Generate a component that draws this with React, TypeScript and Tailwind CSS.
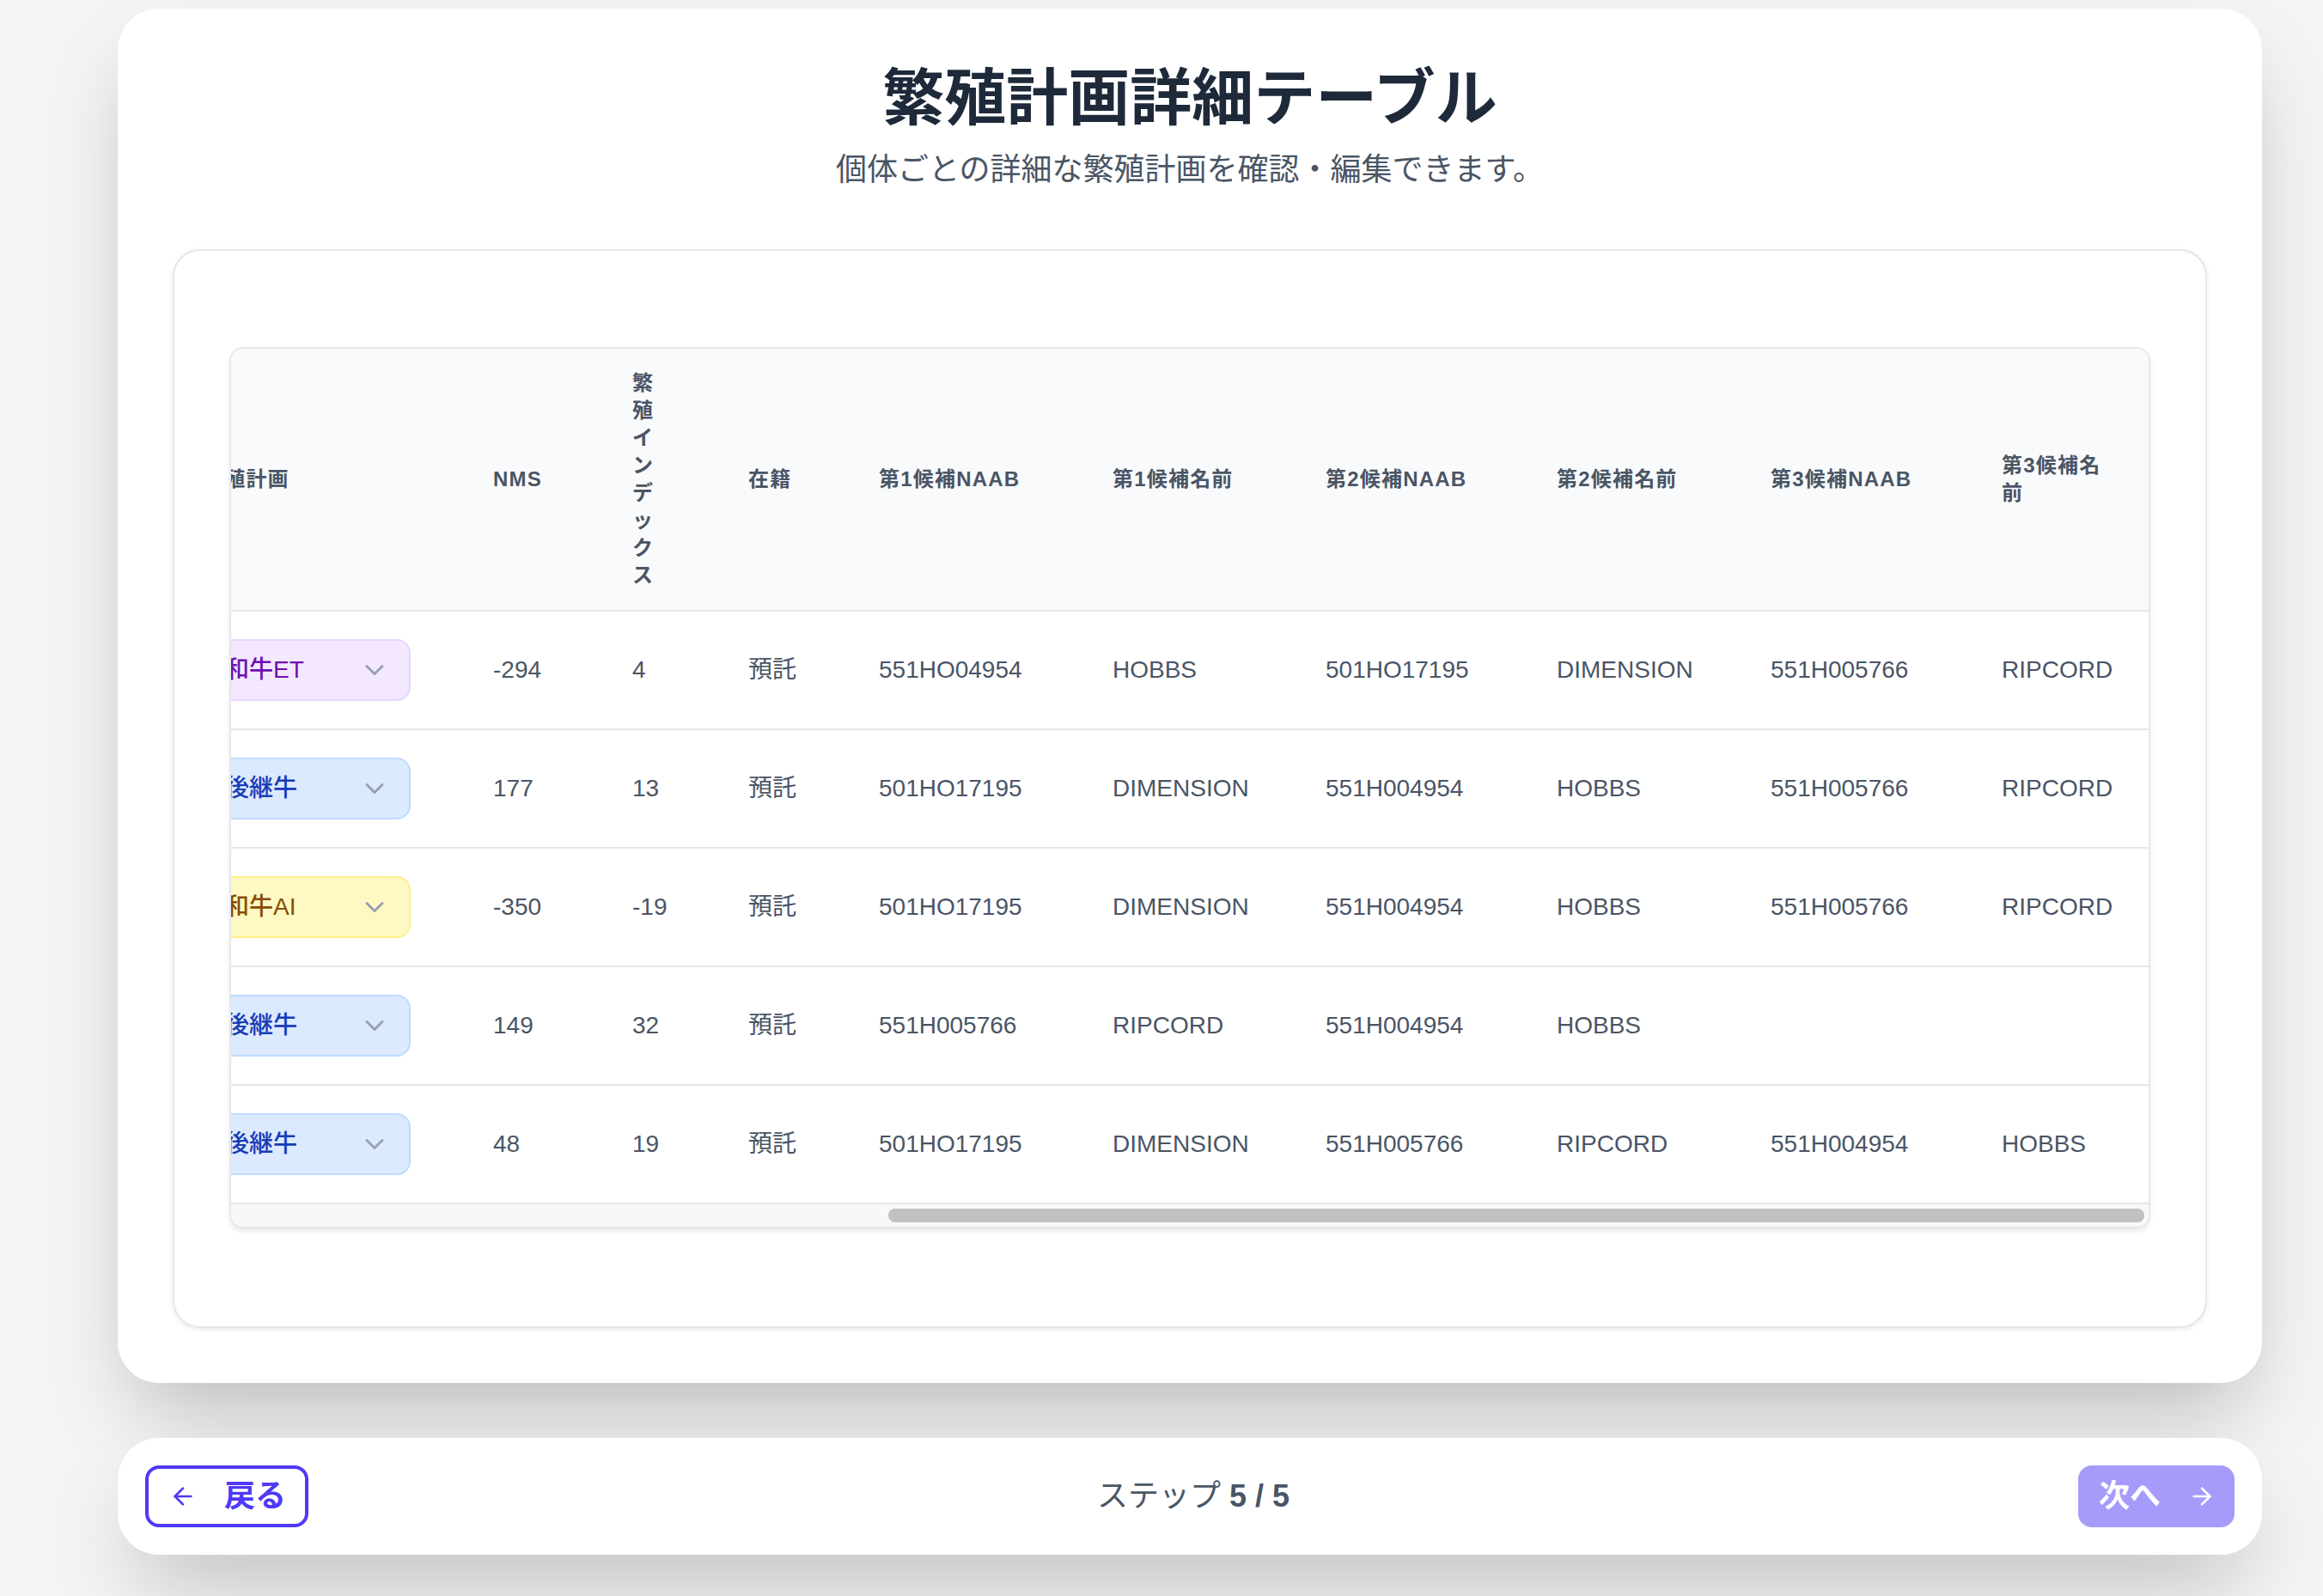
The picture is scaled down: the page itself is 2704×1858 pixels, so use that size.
import { useLayoutEffect, useRef } from "react";
import { ArrowLeft, ArrowRight, ChevronDown } from "lucide-react";

type Plan = "和牛ET" | "後継牛" | "和牛AI";

const planStyles: Record<Plan, string> = {
  和牛ET: "bg-purple-100 border-purple-200 text-purple-800",
  後継牛: "bg-blue-100 border-blue-200 text-blue-800",
  和牛AI: "bg-yellow-100 border-yellow-200 text-yellow-800",
};

type Row = {
  plan: Plan;
  nms: string;
  idx: string;
  status: string;
  c: string[];
};

const rows: Row[] = [
  { plan: "和牛ET", nms: "-294", idx: "4", status: "預託", c: ["551HO04954", "HOBBS", "501HO17195", "DIMENSION", "551H005766", "RIPCORD"] },
  { plan: "後継牛", nms: "177", idx: "13", status: "預託", c: ["501HO17195", "DIMENSION", "551H004954", "HOBBS", "551H005766", "RIPCORD"] },
  { plan: "和牛AI", nms: "-350", idx: "-19", status: "預託", c: ["501HO17195", "DIMENSION", "551H004954", "HOBBS", "551H005766", "RIPCORD"] },
  { plan: "後継牛", nms: "149", idx: "32", status: "預託", c: ["551H005766", "RIPCORD", "551H004954", "HOBBS", "", ""] },
  { plan: "後継牛", nms: "48", idx: "19", status: "預託", c: ["501HO17195", "DIMENSION", "551H005766", "RIPCORD", "551H004954", "HOBBS"] },
];

const colWidths = [
  "w-[1071px]",
  "w-[338px]",
  "w-[162px]",
  "w-[135px]",
  "w-[152px]",
  "w-[272px]",
  "w-[248px]",
  "w-[269px]",
  "w-[249px]",
  "w-[269px]",
  "w-[219px]",
];

const headers = [
  "",
  "繁殖計画",
  "NMS",
  "繁殖インデックス",
  "在籍",
  "第1候補NAAB",
  "第1候補名前",
  "第2候補NAAB",
  "第2候補名前",
  "第3候補NAAB",
  "第3候補名前",
];

const thCls =
  "px-[48px] py-[24px] text-left align-middle text-[24px] leading-[32px] font-semibold uppercase tracking-wider text-gray-600";
const tdCls =
  "px-[48px] py-[32px] align-middle whitespace-nowrap text-[28px] leading-[40px] text-gray-600";

function PlanSelect({ plan }: { plan: Plan }) {
  return (
    <div
      className={`flex h-[72px] w-full items-center justify-between rounded-[16px] border-2 pl-[24px] pr-[22px] text-[28px] leading-[40px] font-medium ${planStyles[plan]}`}
    >
      <span>{plan}</span>
      <ChevronDown size={36} strokeWidth={2} className="text-gray-400" />
    </div>
  );
}

export default function App() {
  const scrollRef = useRef<HTMLDivElement>(null);

  useLayoutEffect(() => {
    const el = scrollRef.current;
    if (el) el.scrollLeft = el.scrollWidth;
  }, []);

  return (
    <div className="min-h-screen bg-gray-100 pt-[10px] pl-[137px] font-[family-name:'Liberation_Sans','Noto_Sans_CJK_JP',sans-serif]">
      <div className="w-[2496px]">
        <main className="rounded-[48px] bg-white p-[64px] shadow-[0_50px_100px_-24px_rgba(0,0,0,0.25)]">
          <div className="mb-[64px] text-center">
            <h1 className="text-[72px] leading-[80px] font-bold text-gray-800">
              繁殖計画詳細テーブル
            </h1>
            <p className="mt-[16px] text-[36px] leading-[56px] text-gray-600">
              個体ごとの詳細な繁殖計画を確認・編集できます。
            </p>
          </div>

          <section className="rounded-[32px] border-2 border-gray-200 bg-white px-[64px] pt-[112px] pb-[114px] shadow-[0_2px_6px_rgba(0,0,0,0.08)]">
            <div className="overflow-hidden rounded-[16px] border-2 border-gray-200 bg-white shadow-[0_4px_6px_-1px_rgba(0,0,0,0.1)]">
              <div ref={scrollRef} className="overflow-x-hidden">
                <table className="w-[3384px] table-fixed border-collapse">
                  <colgroup>
                    {colWidths.map((w, i) => (
                      <col key={i} className={w} />
                    ))}
                  </colgroup>
                  <thead className="bg-gray-50">
                    <tr className="border-b-2 border-gray-200">
                      {headers.map((h, i) => (
                        <th key={i} className={thCls}>
                          {i === 3
                            ? Array.from(h).map((ch, j) => (
                                <span key={j} className="block">
                                  {ch}
                                </span>
                              ))
                            : h}
                        </th>
                      ))}
                    </tr>
                  </thead>
                  <tbody className="bg-white">
                    {rows.map((r, i) => (
                      <tr key={i} className="border-b-2 border-gray-200">
                        <td className={tdCls}></td>
                        <td className={tdCls}>
                          <PlanSelect plan={r.plan} />
                        </td>
                        <td className={tdCls}>{r.nms}</td>
                        <td className={tdCls}>{r.idx}</td>
                        <td className={tdCls}>{r.status}</td>
                        {r.c.map((v, j) => (
                          <td key={j} className={tdCls}>
                            {v}
                          </td>
                        ))}
                      </tr>
                    ))}
                  </tbody>
                </table>
              </div>
              <div className="flex h-[26px] items-center justify-end bg-[#f8f8f8] pr-[5px]">
                <div className="h-[16px] w-[1462px] rounded-full bg-[#c1c1c1]" />
              </div>
            </div>
          </section>
        </main>

        <footer className="mt-[64px] flex items-center justify-between rounded-[48px] bg-white p-[32px] shadow-[0_50px_100px_-24px_rgba(0,0,0,0.25)]">
          <button className="flex h-[72px] items-center gap-[32px] rounded-[16px] border-[4px] border-indigo-600 bg-white pl-[24px] pr-[22px] text-[36px] leading-[48px] font-bold text-indigo-600">
            <ArrowLeft size={32} strokeWidth={2} />
            <span>戻る</span>
          </button>
          <div className="text-[36px] leading-[56px] text-gray-600">
            ステップ <span className="font-semibold text-gray-600">5 / 5</span>
          </div>
          <button
            disabled
            className="flex h-[72px] items-center gap-[32px] rounded-[16px] bg-indigo-600 pl-[24px] pr-[22px] text-[36px] leading-[48px] font-bold text-white opacity-50"
          >
            <span>次へ</span>
            <ArrowRight size={32} strokeWidth={2} />
          </button>
        </footer>
      </div>
    </div>
  );
}
